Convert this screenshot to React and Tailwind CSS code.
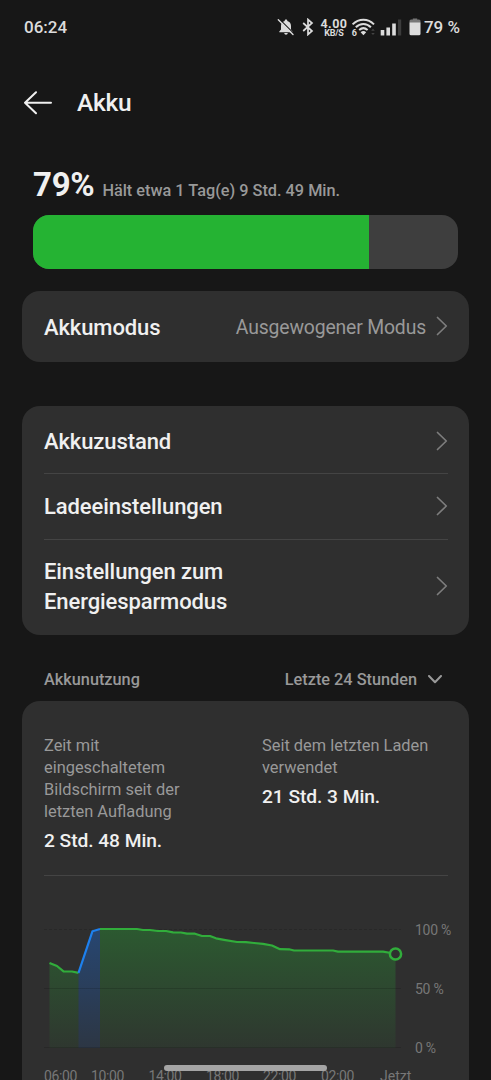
const levels = [
  [5.5, 63], [13, 66], [19.5, 71.3], [28, 71.5], [34.5, 72.8],
];
const charging = [
  [34.5, 72.8], [48.5, 31.2], [56, 29],
];
const discharge = [
  [56, 29], [93, 29], [99, 30], [106, 30], [114, 31], [122, 31], [129, 32.3], [137, 32.5],
  [143, 33.7], [151, 33.7], [158, 36], [166, 36], [172, 38.3], [180, 39.8], [193, 42],
  [202, 42.2], [210, 43], [219, 43.8], [228, 45.5], [236, 49.2], [245, 49.3], [250, 50.5],
  [289, 50.5], [294, 51.6], [339, 51.6], [347, 53], [351.5, 54],
];

const points = (list) => list.map((p) => p.join(",")).join(" ");
const area = (list) =>
  `${list[0][0]},148 ${points(list)} ${list[list.length - 1][0]},148`;

function Chevron() {
  return (
    <svg className="block h-5 w-3 shrink-0" viewBox="0 0 12 20" fill="none" stroke="#7d7d7d" strokeWidth="1.7" strokeLinecap="round" strokeLinejoin="round">
      <path d="M1.5 1.5L10.3 10L1.5 18.5" />
    </svg>
  );
}

function StatusIcons() {
  return (
    <div className="flex h-6 items-center text-[#dcdcdc]">
      <svg className="block h-[18px] w-[18px]" viewBox="0 0 18 18">
        <path fill="#dcdcdc" d="M9 1.4C8.2 1.4 7.7 1.9 7.7 2.6L7.7 3C5.2 3.6 4 5.6 4 8V11.5L2.3 13.5V14.3H15.7V13.5L14 11.5V8C14 5.6 12.8 3.6 10.3 3V2.6C10.3 1.9 9.8 1.4 9 1.4ZM7.3 15.1H10.7C10.7 16.1 10 16.8 9 16.8C8 16.8 7.3 16.1 7.3 15.1Z" />
        <path d="M2.2 .8L17 15.6" stroke="#171717" strokeWidth="1.2" />
        <path d="M1.3 1.7L16 16.4" stroke="#dcdcdc" strokeWidth="1.4" strokeLinecap="round" />
      </svg>
      <svg className="ml-[7px] block h-[18px] w-3" viewBox="0 0 12 18" fill="none" stroke="#dcdcdc" strokeWidth="1.7" strokeLinejoin="miter">
        <path d="M1.2 5L10 13L6 16.5V1.5L10 5L1.2 13" />
      </svg>
      <div className="ml-[5px] flex w-[30px] flex-col items-center font-bold">
        <span className="text-[12.5px] leading-[11px] tracking-[0.4px]">4.00</span>
        <span className="text-[9px] leading-[8px] tracking-[-0.2px]">KB/S</span>
      </div>
      <svg className="ml-[2px] block h-[20px] w-[25px]" viewBox="0 0 25 20" fill="none" stroke="#dcdcdc" strokeWidth="2">
        <path d="M1.6 7.4C7.8 1.2 17 1.2 23 7.4" />
        <path d="M4.8 10.2C9.2 5.9 15.6 5.9 19.9 10.2" />
        <path d="M8.2 13C10.8 10.7 14 10.7 16.6 13" />
        <path d="M9.6 15.3Q12.4 12.8 15.2 15.3L12.4 18.2Z" fill="#dcdcdc" stroke="none" />
        <text x="0.8" y="18.6" fill="#dcdcdc" stroke="none" fontSize="9" fontWeight="700">6</text>
        <path d="M20.2 13.8L22 11.7L23.8 13.8ZM20.2 16L22 18.1L23.8 16Z" fill="#444" stroke="none" />
      </svg>
      <svg className="ml-[4px] block h-[18px] w-[22px]" viewBox="0 0 22 18" fill="#dcdcdc">
        <rect x="0.7" y="12" width="3.6" height="5.5" />
        <rect x="6.4" y="9.5" width="3.6" height="8" />
        <rect x="12.2" y="5.5" width="3.6" height="12" />
        <rect x="18" y="1.5" width="3.2" height="16" fill="#3c3c3c" />
      </svg>
      <svg className="ml-[7px] block h-[18px] w-3" viewBox="0 0 12 18">
        <path d="M3.8 0.5H8.2V2H3.8Z" fill="#777" />
        <rect x="0.5" y="1.6" width="11" height="4" rx="1.5" fill="#777" />
        <path d="M.5 4.6H11.5V15.8Q11.5 17.3 10 17.3H2Q.5 17.3 .5 15.8Z" fill="#dcdcdc" />
      </svg>
      <span className="ml-[3px] whitespace-nowrap text-[17px] font-medium leading-6">79 %</span>
    </div>
  );
}

function Row({ children, className }) {
  return (
    <div className={`flex items-center justify-between ${className}`}>
      <span className="w-[230px] pt-[2px] text-[22px] font-medium leading-[30.5px] tracking-[-0.1px] text-[#f0f0f0]">{children}</span>
      <Chevron />
    </div>
  );
}

function Chart() {
  return (
    <svg className="block h-[150px] w-[364px] shrink-0" viewBox="0 0 364 150" fill="none">
      <defs>
        <linearGradient id="green" x1="0" y1="29" x2="0" y2="148" gradientUnits="userSpaceOnUse">
          <stop offset="0" stopColor="#25b333" stopOpacity="0.32" />
          <stop offset="1" stopColor="#25b333" stopOpacity="0.06" />
        </linearGradient>
        <linearGradient id="blue" x1="0" y1="29" x2="0" y2="148" gradientUnits="userSpaceOnUse">
          <stop offset="0" stopColor="#1677ff" stopOpacity="0.32" />
          <stop offset="1" stopColor="#1677ff" stopOpacity="0.1" />
        </linearGradient>
      </defs>
      <polygon points={area(levels)} fill="url(#green)" />
      <polygon points={area(charging)} fill="url(#blue)" />
      <polygon points={area(discharge)} fill="url(#green)" />
      <g stroke="#000" strokeOpacity="0.14">
        <path d="M0 29.5H357" strokeDasharray="3 2" />
        <path d="M0 88.5H357" />
        <path d="M0 147.5H357" />
      </g>
      <g strokeWidth="2.2" strokeLinejoin="round">
        <polyline points={points(levels)} stroke="#31ad3b" />
        <polyline points={points(discharge)} stroke="#31ad3b" />
        <polyline points={points(charging)} stroke="#1d80ee" />
      </g>
      <circle cx="351.5" cy="54" r="5.6" fill="#2f2f2f" stroke="#31ad3b" strokeWidth="2.5" />
    </svg>
  );
}

export default function App() {
  return (
    <main className="relative flex h-[1080px] w-[491px] flex-col overflow-hidden bg-[#171717] font-[Roboto,sans-serif] text-[#f0f0f0]">
      <header className="flex h-[54px] shrink-0 items-center justify-between pl-6 pr-[31px]">
        <span className="text-[17px] font-medium leading-6 text-[#dcdcdc]">06:24</span>
        <StatusIcons />
      </header>

      <div className="flex h-[98px] shrink-0 items-center gap-[25px] pl-6">
        <svg className="block h-6 w-7" viewBox="0 0 28 24" fill="none" stroke="#f0f0f0" strokeWidth="2" strokeLinecap="round" strokeLinejoin="round">
          <path d="M12 1.2L1 11.7L12 22.2M1 11.7H27" />
        </svg>
        <h1 className="text-[24.5px] font-medium leading-8 tracking-[-0.3px]">Akku</h1>
      </div>

      <section className="flex h-[139px] shrink-0 flex-col pl-[33px] pr-[33px] pt-[13px]">
        <div className="flex h-[49px] items-baseline gap-2">
          <span className="text-[33px] font-bold leading-10 tracking-[-0.3px]">79%</span>
          <span className="text-[16.3px] font-medium text-[#999]">Hält etwa 1 Tag(e) 9 Std. 49 Min.</span>
        </div>
        <div className="mt-[0.5px] h-[54.5px] overflow-hidden rounded-[16px] bg-[#3e3e3e]">
          <div className="h-full w-[79%] bg-[#25b333]" />
        </div>
      </section>

      <section className="mx-[22px] flex h-[70.5px] shrink-0 items-center justify-between rounded-[18px] bg-[#2f2f2f] pl-[22px] pr-[21px]">
        <span className="pt-[2px] text-[22px] font-medium tracking-[-0.1px]">Akkumodus</span>
        <div className="flex items-center gap-[10px]">
          <span className="pt-[2px] text-[19.4px] tracking-[-0.17px] text-[#999]">Ausgewogener Modus</span>
          <Chevron />
        </div>
      </section>

      <section className="mx-[22px] mt-[44px] flex h-[229px] shrink-0 flex-col rounded-[18px] bg-[#2f2f2f] pl-[22px] pr-[21px]">
        <Row className="h-[68px] border-b border-[#444] pt-[4px]">Akkuzustand</Row>
        <Row className="h-[66px] border-b border-[#444]">Ladeeinstellungen</Row>
        <Row className="h-[93px]">Einstellungen zum Energiesparmodus</Row>
      </section>

      <div className="flex h-[66px] shrink-0 items-center justify-between pl-11 pr-[49px] pt-[25px] text-[16.3px] font-medium text-[#999]">
        <span>Akkunutzung</span>
        <div className="flex items-center gap-[11px]">
          <span>Letzte 24 Stunden</span>
          <svg className="block h-2.5 w-3.5" viewBox="0 0 14 10" fill="none" stroke="#999" strokeWidth="2" strokeLinecap="round" strokeLinejoin="round">
            <path d="M1 1L7 7.3L13 1" />
          </svg>
        </div>
      </div>

      <section className="mx-[22px] flex h-[400px] shrink-0 flex-col rounded-t-[18px] bg-[#2f2f2f] pl-[22px] pr-[21px]">
        <div className="flex h-[175px] shrink-0 border-b border-[#444] pt-[34px] text-[16.4px] leading-[22px] text-[#999]">
          <div className="w-[218px]">
            <p className="w-[160px]">Zeit mit eingeschaltetem Bildschirm seit der letzten Aufladung</p>
            <p className="mt-[6px] text-[19.2px] font-medium leading-6 tracking-[-0.05px] text-[#f0f0f0]">2 Std. 48 Min.</p>
          </div>
          <div>
            <p className="w-[180px]">Seit dem letzten Laden verwendet</p>
            <p className="mt-[6px] text-[19.2px] font-medium leading-6 tracking-[-0.05px] text-[#f0f0f0]">21 Std. 3 Min.</p>
          </div>
        </div>
        <div className="mt-[24px] flex h-[150px] shrink-0">
          <Chart />
          <div className="flex shrink-0 flex-col pl-[7px] pt-[20px] text-[14px] leading-5 tracking-[-0.25px] text-[#777]">
            <span className="h-[59px] shrink-0 whitespace-nowrap">100 %</span>
            <span className="h-[59px] shrink-0 whitespace-nowrap">50 %</span>
            <span className="shrink-0 whitespace-nowrap">0 %</span>
          </div>
        </div>
        <div className="mt-[16px] flex text-[14px] leading-5 tracking-[-0.35px] text-[#777]">
          <span className="w-[47px]">06:00</span>
          <span className="w-[57.5px]">10:00</span>
          <span className="w-[57.5px]">14:00</span>
          <span className="w-[57px]">18:00</span>
          <span className="w-[58px]">22:00</span>
          <span className="w-[59px]">02:00</span>
          <span className="tracking-normal">Jetzt</span>
        </div>
      </section>
      <div className="absolute left-[164px] top-[1065px] h-[5.5px] w-[163px] rounded-full bg-[#a5a5a5]" />
    </main>
  );
}
